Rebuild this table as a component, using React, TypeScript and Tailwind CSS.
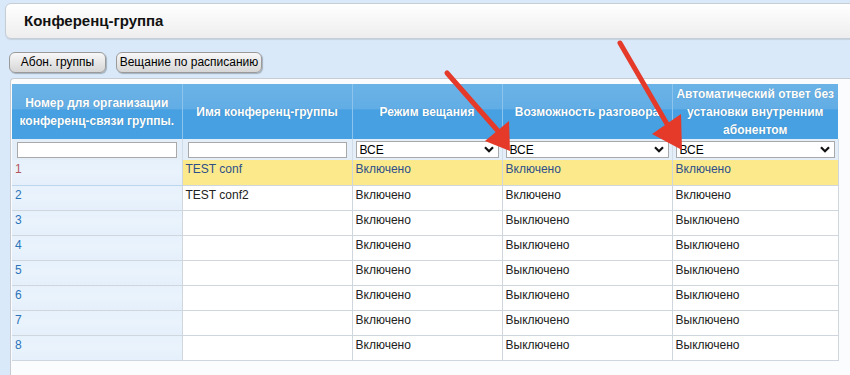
import React from "react";

type Row = {
  id: number;
  name: string;
  mode: string;
  talk: string;
  auto: string;
};

const rows: Row[] = [
  { id: 1, name: "TEST conf", mode: "Включено", talk: "Включено", auto: "Включено" },
  { id: 2, name: "TEST conf2", mode: "Включено", talk: "Включено", auto: "Включено" },
  { id: 3, name: "", mode: "Включено", talk: "Выключено", auto: "Выключено" },
  { id: 4, name: "", mode: "Включено", talk: "Выключено", auto: "Выключено" },
  { id: 5, name: "", mode: "Включено", talk: "Выключено", auto: "Выключено" },
  { id: 6, name: "", mode: "Включено", talk: "Выключено", auto: "Выключено" },
  { id: 7, name: "", mode: "Включено", talk: "Выключено", auto: "Выключено" },
  { id: 8, name: "", mode: "Включено", talk: "Выключено", auto: "Выключено" },
];

// fake select box (ВСЕ + chevron)
const SelectBox: React.FC = () => (
  <div className="mx-[3px] flex h-[17px] items-center justify-between border border-[#a9a9a9] bg-white pl-[3px] pr-[4px] text-[12px] text-black">
    <span>ВСЕ</span>
    <svg width="10" height="7" viewBox="0 0 10 7">
      <path d="M1 1.2 L5 5.2 L9 1.2" fill="none" stroke="#111" strokeWidth="2.2" />
    </svg>
  </div>
);

const TextBox: React.FC = () => (
  <div className="mx-[5px] h-[16px] border border-[#a9a9a9] bg-white" />
);

const Btn: React.FC<{ w: string; children: React.ReactNode }> = ({ w, children }) => (
  <button
    className={`${w} h-[21px] rounded-[6px] border border-[#9a9a9a] bg-gradient-to-b from-[#f8f8f8] to-[#d6d6d6] px-0 text-[12px] leading-[19px] text-black shadow-[1px_1px_1px_rgba(0,0,0,0.25)]`}
  >
    {children}
  </button>
);

const th =
  "whitespace-nowrap border-r border-[#8cc4ee] px-0 text-center align-middle text-[12px] font-bold leading-[18px] text-white [text-shadow:0_0_1px_rgba(0,0,0,0.25)]";
const td = "h-[25px] border-b border-r border-[#d0d6de] px-[3px] pt-[2px] align-top text-[12px] leading-[15px]";

const App: React.FC = () => {
  return (
    <div className="relative h-[375px] w-[850px] overflow-hidden bg-[#d9e9fa] font-['Liberation_Sans',Arial,sans-serif]">
      {/* title */}
      <div className="pl-[5px] pt-[3px]">
        <div className="flex h-[36px] w-[860px] items-center rounded-[6px] border border-[#c6cdd4] bg-gradient-to-b from-white to-[#eeeeee] pl-[18px] shadow-[0_1px_1px_rgba(0,0,0,0.1)]">
          <h1 className="text-[15px] font-bold text-[#111]">Конференц-группа</h1>
        </div>
      </div>

      {/* tabs */}
      <div className="mt-[13px] flex gap-[10px] pl-[9px]">
        <Btn w="w-[97px]">Абон. группы</Btn>
        <Btn w="w-[146px]">Вещание по расписанию</Btn>
      </div>

      {/* panel */}
      <div className="ml-[10px] mt-[5px] h-[400px] rounded-tl-[4px] border-l border-t border-[#c8ccd2] bg-[#fbfcfd] pl-[1px] pt-[5px]">
        <table className="table-fixed border-collapse">
          <colgroup>
            <col className="w-[170px]" />
            <col className="w-[170px]" />
            <col className="w-[150px]" />
            <col className="w-[170px]" />
            <col className="w-[166px]" />
          </colgroup>
          <thead>
            <tr className="h-[55px] bg-[linear-gradient(to_bottom,#6ab3e7_0%,#62ade5_45%,#47a0e1_47%,#46a0e1_100%)]">
              <th className={th}>
                Номер для организации
                <br />
                конференц-связи группы.
              </th>
              <th className={th}>Имя конференц-группы</th>
              <th className={th}>Режим вещания</th>
              <th className={th}>Возможность разговора</th>
              <th className={th + " border-r-0"}>
                Автоматический ответ без
                <br />
                установки внутренним
                <br />
                абонентом
              </th>
            </tr>
            <tr className="h-[21px] bg-[#e4eef8]">
              <th className="border-r border-[#d0dce8] p-0 align-middle font-normal">
                <TextBox />
              </th>
              <th className="border-r border-[#d0dce8] p-0 align-middle font-normal">
                <TextBox />
              </th>
              <th className="border-r border-[#d0dce8] p-0 align-middle font-normal">
                <SelectBox />
              </th>
              <th className="border-r border-[#d0dce8] p-0 align-middle font-normal">
                <SelectBox />
              </th>
              <th className="border-r border-[#d0dce8] p-0 align-middle font-normal">
                <SelectBox />
              </th>
            </tr>
          </thead>
          <tbody>
            {rows.map((r) => {
              const hl = r.id === 1;
              const txt = hl ? "border-[#bcd6ee] text-[#2e4f8a]" : "text-[#222]";
              return (
                <tr key={r.id} className={hl ? "bg-[#fbe98b]" : "bg-white"}>
                  <td
                    className={`${td} bg-gradient-to-b from-[#e6f1fc] via-[#eaf3fc] to-[#e4effb] ${
                      hl ? "border-b-[#bcd6ee] text-[#b5545c]" : "text-[#2b73b8]"
                    }`}
                  >
                    {r.id}
                  </td>
                  <td className={`${td} ${txt}`}>{r.name}</td>
                  <td className={`${td} ${txt}`}>{r.mode}</td>
                  <td className={`${td} ${txt}`}>{r.talk}</td>
                  <td className={`${td} ${txt}`}>{r.auto}</td>
                </tr>
              );
            })}
          </tbody>
        </table>
      </div>

      {/* annotation arrows */}
      <svg className="pointer-events-none absolute left-0 top-0" width="850" height="375">
        <line x1="447" y1="73" x2="498" y2="131" stroke="#e53a2a" strokeWidth="5" strokeLinecap="round" />
        <polygon points="510,151 485,141 509,121" fill="#e53a2a" />
        <line x1="620" y1="43" x2="667" y2="124" stroke="#e53a2a" strokeWidth="5" strokeLinecap="round" />
        <polygon points="682,150 652,134 681,114" fill="#e53a2a" />
      </svg>
    </div>
  );
};

export default App;
